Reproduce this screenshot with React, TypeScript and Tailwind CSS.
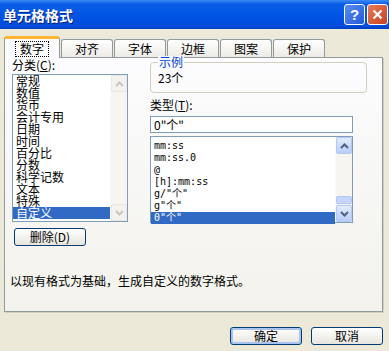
import React from "react";

const categories = ["常规", "数值", "货币", "会计专用", "日期", "时间", "百分比", "分数", "科学记数", "文本", "特殊", "自定义"];
const formats = ["mm:ss", "mm:ss.0", "@", "[h]:mm:ss", 'g/"个"', 'g"个"', '0"个"'];
const tabs = ["对齐", "字体", "边框", "图案", "保护"];

const cjk = { fontFamily: '"Noto Sans CJK SC", "Liberation Sans", sans-serif' };

// little chevron used in the scrollbar buttons
function Chevron({ up, color }: { up?: boolean; color: string }) {
  return (
    <svg width="9" height="6" viewBox="0 0 9 6">
      <path d={up ? "M1 5 L4.5 1.5 L8 5" : "M1 1 L4.5 4.5 L8 1"} fill="none" stroke={color} strokeWidth="2" />
    </svg>
  );
}

function ScrollBar({ enabled }: { enabled?: boolean }) {
  const btn = enabled
    ? "border border-[#B4C8F4] bg-linear-to-b from-[#E3EBFE] to-[#B9CDF9] rounded-[2px]"
    : "border border-[#E8E8E4] bg-[#F3F2EE] rounded-[2px]";
  const arrow = enabled ? "#4D6185" : "#C9C7BA";
  return (
    <div className="w-[17px] h-full flex flex-col bg-[#F6F5F1] border-l border-[#FBFBF9]">
      <div className={`h-[17px] flex items-center justify-center ${btn}`}>
        <Chevron up color={arrow} />
      </div>
      <div className="flex-1 flex flex-col justify-end">
        {enabled && <div className="h-[8px] mb-[1px] rounded-[2px] border border-[#B4C8F4] bg-[#C6D6FB]" />}
      </div>
      <div className={`h-[17px] flex items-center justify-center ${btn}`}>
        <Chevron color={arrow} />
      </div>
    </div>
  );
}

function XpButton({ label, isDefault, className }: { label: string; isDefault?: boolean; className?: string }) {
  return (
    <div
      className={`h-[18px] flex items-center justify-center rounded-[3px] border border-[#003C74] bg-linear-to-b from-white to-[#E6E5DE] text-[12px] text-black ${
        isDefault ? "shadow-[inset_0_0_0_2px_#A9C4F0]" : ""
      } ${className ?? ""}`}
      style={cjk}
    >
      {label}
    </div>
  );
}

export default function App() {
  return (
    <div className="w-[389px] h-[351px] bg-[#ECE9D8] flex flex-col overflow-hidden select-none" style={cjk}>
      {/* title bar */}
      <div className="h-[29px] shrink-0 flex items-center justify-between pl-[3px] pr-[1px] bg-[linear-gradient(to_bottom,#3D8BF5_0%,#0A5EE6_14%,#0055E5_50%,#004CDC_88%,#0040C4_100%)]">
        <span className="text-white text-[14px] font-bold leading-none [text-shadow:1px_1px_0_#0A1E80]">单元格格式</span>
        <div className="flex gap-[2px]">
          <div className="w-[21px] h-[21px] rounded-[3px] border border-white bg-linear-to-br from-[#5A8DF2] to-[#2458D8] flex items-center justify-center text-white font-bold text-[15px] leading-none" style={{ fontFamily: '"Liberation Sans", sans-serif' }}>
            ?
          </div>
          <div className="w-[21px] h-[21px] rounded-[3px] border border-white bg-linear-to-br from-[#E87B58] to-[#C6401C] flex items-center justify-center">
            <svg width="11" height="11" viewBox="0 0 11 11">
              <path d="M1.5 1.5 L9.5 9.5 M9.5 1.5 L1.5 9.5" stroke="white" strokeWidth="2.2" />
            </svg>
          </div>
        </div>
      </div>

      <div className="flex-1 flex flex-col pl-[4px] pr-[6px] pt-[7px]">
        {/* tabs */}
        <div className="h-[21px] flex items-end gap-[1px]">
          <div className="relative z-10 -mb-[1px] w-[56px] h-[22px] rounded-t-[3px] border border-b-0 border-[#919B9C] border-t-[3px] border-t-[#FFB432] bg-[#FCFCFE] flex items-center justify-center text-[12px]">
            <span className="px-[4px] leading-[14px] outline-1 outline-dotted outline-black">数字</span>
          </div>
          {tabs.map((t) => (
            <div
              key={t}
              className="w-[52px] h-[18px] rounded-t-[3px] border border-b-0 border-[#919B9C] bg-linear-to-b from-white to-[#ECEBE5] flex items-center justify-center text-[12px] leading-none"
            >
              {t}
            </div>
          ))}
        </div>

        {/* panel */}
        <div className="h-[255px] border border-[#919B9C] bg-linear-to-b from-[#FCFCFE] to-[#F3F2EC] shadow-[1px_1px_0_#D0CEBF] pl-[7px] pr-[15px] flex flex-col">
          <div className="flex gap-[22px]">
            {/* category column */}
            <div className="w-[116px] flex flex-col">
              <div className="h-[16px] text-[12px] leading-[14px]">分类(<u>C</u>):</div>
              <div className="h-[148px] border border-[#7F9DB9] bg-white flex">
                <div className="flex-1 text-[12px]">
                  {categories.map((c, i) => (
                    <div
                      key={c}
                      className={`h-[12px] leading-[12px] pl-[3px] ${i === categories.length - 1 ? "bg-[#316AC5] text-white" : ""}`}
                    >
                      {c}
                    </div>
                  ))}
                </div>
                <ScrollBar />
              </div>
              <XpButton label="删除(D)" className="w-[72px] mt-[6px] ml-[2px]" />
            </div>

            {/* format column */}
            <div className="flex-1 flex flex-col pt-[4px]">
              {/* sample group box */}
              <div className="h-[31px] border border-[#D0D0BF] rounded-[4px] pl-[7px] flex flex-col">
                <span className="-mt-[7px] self-start bg-[#FBFBFD] px-[1px] text-[12px] leading-[12px] text-[#0046D5]">示例</span>
                <div className="mt-[4px] text-[12px] leading-[12px]">23个</div>
              </div>
              <div className="mt-[5px] h-[18px] text-[12px] leading-[14px]">类型(<u>T</u>):</div>
              <div className="w-[203px] h-[17px] border border-[#7F9DB9] bg-white text-[12px] leading-[15px] pl-[3px]">0"个"</div>
              <div className="w-[203px] h-[87px] mt-[3px] border border-[#7F9DB9] bg-white flex">
                <div className="flex-1 pt-[3px] text-[10px]" style={{ fontFamily: '"DejaVu Sans Mono", "Noto Sans CJK SC", monospace' }}>
                  {formats.map((f, i) => (
                    <div
                      key={f}
                      className={`h-[12px] leading-[12px] pl-[3px] ${i === formats.length - 1 ? "bg-[#316AC5] text-white" : ""}`}
                    >
                      {f}
                    </div>
                  ))}
                </div>
                <ScrollBar enabled />
              </div>
            </div>
          </div>

          <div className="mt-[29px] -ml-[2px] text-[12px] leading-[12px]">以现有格式为基础，生成自定义的数字格式。</div>
        </div>

        {/* buttons */}
        <div className="flex justify-end gap-[9px] mt-[15px]">
          <XpButton label="确定" isDefault className="w-[72px]" />
          <XpButton label="取消" className="w-[72px]" />
        </div>
      </div>
    </div>
  );
}
